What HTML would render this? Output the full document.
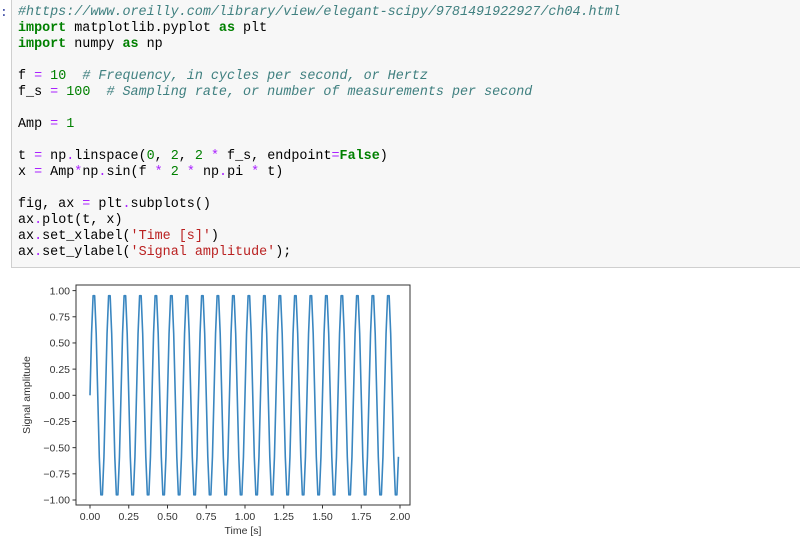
<!DOCTYPE html><html><head><style>
body{margin:0;width:800px;height:547px;background:#fff;overflow:hidden;position:relative;font-family:"Liberation Sans",sans-serif}
.cell{position:absolute;left:11px;top:-2px;width:790px;height:270px;background:#f7f7f7;border:1px solid #cfcfcf;box-sizing:border-box}
pre{margin:0;position:absolute;left:18px;top:5px;font-family:"Liberation Mono",monospace;font-size:13.4px;line-height:16px;color:#000}
.k{color:#008000;font-weight:bold}.c{color:#408080;font-style:italic}.o{color:#AA22FF}.n{color:#008000}.s{color:#BA2121}
.p{position:absolute;left:0;top:5px;font-family:"Liberation Mono",monospace;font-size:13px;line-height:16px;color:#303f9f}
</style></head><body>
<div class="cell"></div>
<div class="p">:</div>
<pre><span class="c">#https://www.oreilly.com/library/view/elegant-scipy/9781491922927/ch04.html</span>
<span class="k">import</span> matplotlib.pyplot <span class="k">as</span> plt
<span class="k">import</span> numpy <span class="k">as</span> np

f <span class="o">=</span> <span class="n">10</span>  <span class="c"># Frequency, in cycles per second, or Hertz</span>
f_s <span class="o">=</span> <span class="n">100</span>  <span class="c"># Sampling rate, or number of measurements per second</span>

Amp <span class="o">=</span> <span class="n">1</span>

t <span class="o">=</span> np<span class="o">.</span>linspace(<span class="n">0</span>, <span class="n">2</span>, <span class="n">2</span> <span class="o">*</span> f_s, endpoint<span class="o">=</span><span class="k">False</span>)
x <span class="o">=</span> Amp<span class="o">*</span>np<span class="o">.</span>sin(f <span class="o">*</span> <span class="n">2</span> <span class="o">*</span> np<span class="o">.</span>pi <span class="o">*</span> t)

fig, ax <span class="o">=</span> plt<span class="o">.</span>subplots()
ax<span class="o">.</span>plot(t, x)
ax<span class="o">.</span>set_xlabel(<span class="s">'Time [s]'</span>)
ax<span class="o">.</span>set_ylabel(<span class="s">'Signal amplitude'</span>);</pre>
<svg width="800" height="547" style="position:absolute;left:0;top:0" font-family="Liberation Sans,sans-serif" font-size="10.5" fill="#333">
<rect x="76" y="285" width="334" height="220" fill="none" stroke="#333" stroke-width="1"/>
<g id="yt" text-anchor="end"></g>
<g id="xt" text-anchor="middle"></g>
<polyline id="pl" fill="none" stroke="#3a86c0" stroke-width="1.6" stroke-linejoin="round"/>
<text x="243" y="534" text-anchor="middle" font-size="10.5">Time [s]</text>
<text transform="translate(30,395) rotate(-90)" text-anchor="middle" font-size="10.5">Signal amplitude</text>
</svg>
<script>
var X=function(t){return 90+155*t},Y=function(v){return 395.3-104.7*v};
var pts=[];for(var i=0;i<200;i++){var t=i/100;pts.push(X(t).toFixed(2)+","+Y(Math.sin(20*Math.PI*t)).toFixed(2));}
document.getElementById('pl').setAttribute('points',pts.join(' '));
var yt=document.getElementById('yt'),xt=document.getElementById('xt'),h='';
[1,.75,.5,.25,0,-.25,-.5,-.75,-1].forEach(function(v){var y=Y(v);var s=(v<0?'\u2212':'')+Math.abs(v).toFixed(2);
h+='<line x1="72.5" x2="76" y1="'+y+'" y2="'+y+'" stroke="#333"/><text x="70" y="'+(y+3.7)+'">'+s+'</text>';});
yt.innerHTML=h;h='';
for(var k=0;k<=8;k++){var t=k*.25,x=X(t);h+='<line x1="'+x+'" x2="'+x+'" y1="505" y2="508.5" stroke="#333"/><text x="'+x+'" y="520">'+t.toFixed(2)+'</text>';}
xt.innerHTML=h;
</script>
</body></html>
